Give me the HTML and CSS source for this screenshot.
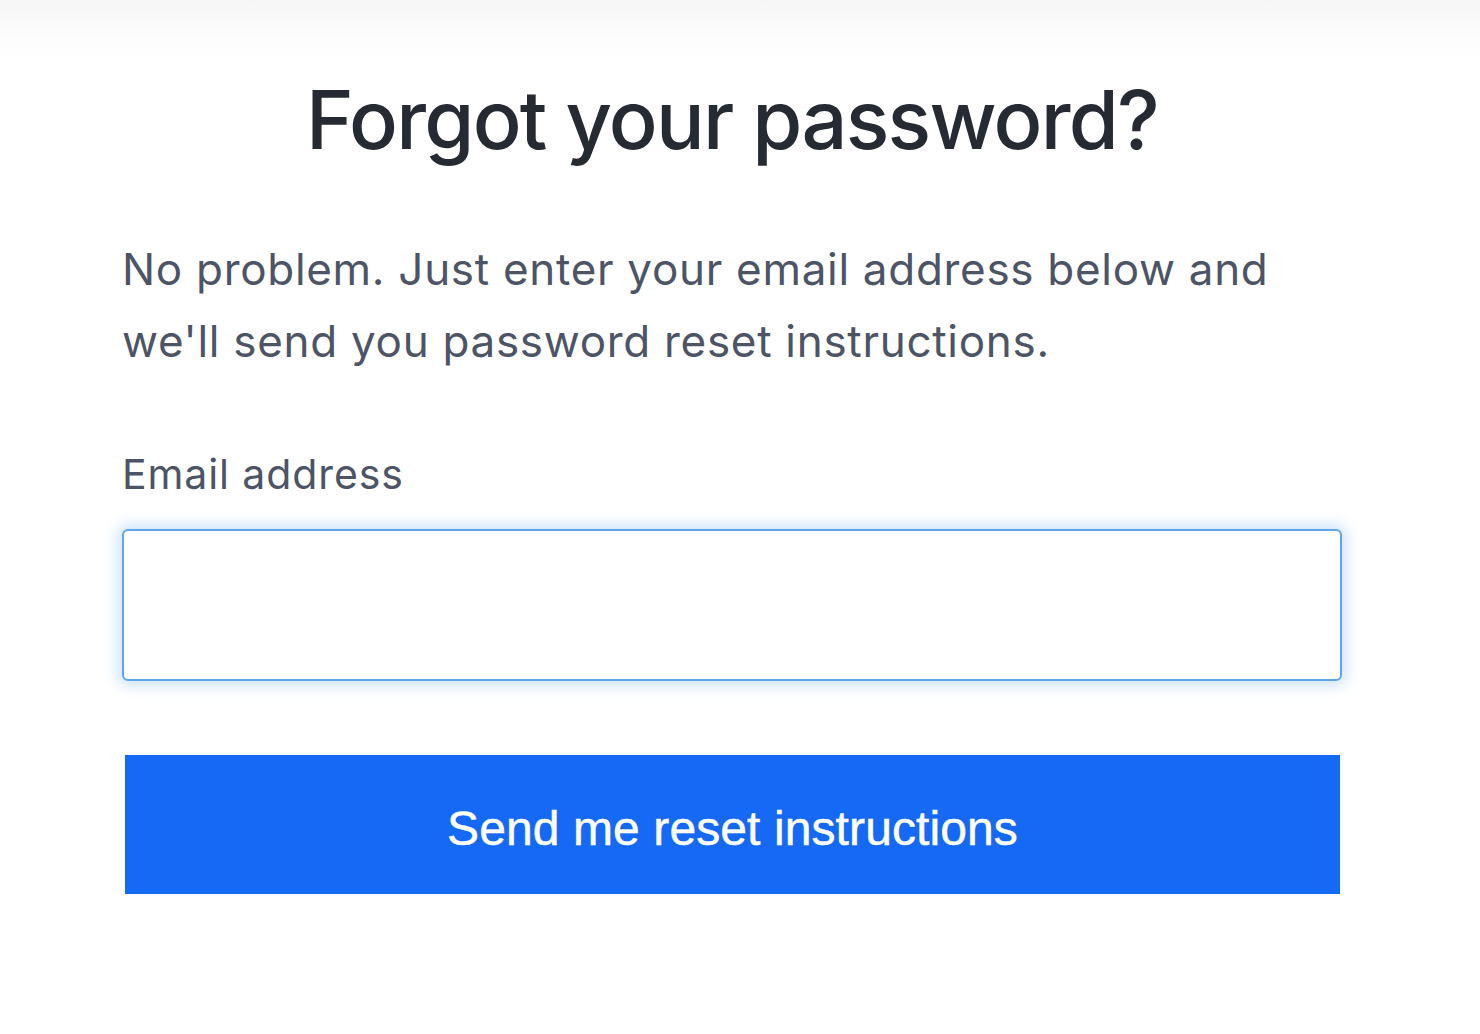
FILE: index.html
```html
<!DOCTYPE html>
<html lang="en">
<head>
<meta charset="utf-8">
<title>Forgot your password?</title>
<link rel="stylesheet" href="styles.css">
</head>
<body>
<div class="page">
  <main class="card">
    <h1 class="title">Forgot your password?</h1>
    <p class="lead">No problem. Just enter your email address below and we'll send you password reset instructions.</p>
    <form class="form">
      <label class="label" for="email">Email address</label>
      <input class="input" id="email" type="email">
      <button class="button" type="button">Send me reset instructions</button>
    </form>
  </main>
</div>
</body>
</html>
```
FILE: styles.css
```css
* { box-sizing: border-box; }
html, body { margin: 0; padding: 0; background: #ffffff; }
body {
  font-family: Inter, "Noto Sans", sans-serif;
  min-height: 1034px;
  background: linear-gradient(to bottom, #f6f6f6 0px, #fdfdfd 40px, #ffffff 60px);
}
.page {
  padding: 0 0 0 122px;
}
.card {
  width: 1220px;
}
.title {
  margin: 0;
  padding-top: 74px;
  font-size: 81px;
  font-weight: 500;
  line-height: 92px;
  color: #262a33;
  text-align: center;
  letter-spacing: -1.75px;
}
.lead {
  margin: 67px 0 0;
  font-size: 44px;
  line-height: 72px;
  color: #4d5466;
  width: 1180px;
  letter-spacing: 0.7px;
}
.form { margin-top: 69px; display: flex; flex-direction: column; }
.label {
  font-size: 41px;
  line-height: 56px;
  color: #4d5466;
  letter-spacing: 0.9px;
}
.input {
  margin-top: 27px;
  height: 152px;
  border: 2.5px solid #62a4e8;
  border-radius: 6px;
  background: #fff;
  box-shadow: 0 0 14px 5px rgba(110, 170, 240, 0.32);
  outline: none;
}
.button {
  margin: 74px 2px 0 3px;
  height: 139px;
  padding: 8px 0 0;
  border: none;
  background: #1569f5;
  color: #ffffff;
  font-family: "Liberation Sans", Arial, sans-serif;
  font-size: 48px;
  font-weight: 400;
  letter-spacing: 0.1px;
  -webkit-text-stroke: 0.5px #ffffff;
  cursor: pointer;
}
```
